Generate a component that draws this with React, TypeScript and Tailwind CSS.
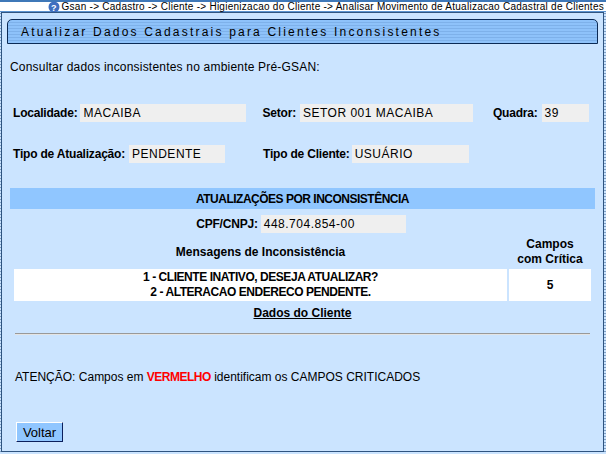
function Field({ label, value, w, gap = "ml-[3px]" }: { label: string; value: string; w: string; gap?: string }) {
  return (
    <div className="flex items-center">
      <span className="font-bold whitespace-nowrap tracking-[-0.2px]">{label}</span>
      <span className={`${gap} ${w} h-[18px] bg-[#efefef] pl-[3px] leading-[18px] text-[12px] whitespace-nowrap tracking-[0.5px]`}>{value}</span>
    </div>
  );
}

export default function App() {
  return (
    <div className="w-[606px] h-[454px] overflow-hidden bg-[repeating-linear-gradient(0deg,#cbe4ff_0px,#cbe4ff_2px,#7f9fc4_2px,#7f9fc4_3px)] font-['Liberation_Sans',Arial,sans-serif] text-[12px] text-black flex flex-col">
      <div className="h-[12px] shrink-0 bg-white border-t-[2px] border-[#3f78b8] border-b border-b-[#5b93d0] flex items-center justify-end pr-[2px] text-[10px] leading-[9px] tracking-[0.26px] whitespace-nowrap">
        <svg width="12" height="12" viewBox="0 0 12 12" className="mr-[2px] shrink-0">
          <circle cx="6" cy="6" r="5.5" fill="#3f6fc0" />
          <text x="6" y="9.5" textAnchor="middle" fontSize="9" fontWeight="700" fill="#fff">?</text>
        </svg>
        <span>Gsan -&gt; Cadastro -&gt; Cliente -&gt; Higienizacao do Cliente -&gt; Analisar Movimento de Atualizacao Cadastral de Clientes</span>
      </div>
      <div className="flex-1 flex flex-col ml-px mr-[2px] mb-[2px] bg-[#cbe4ff] border border-[#2f5480] pt-[6px] pl-[5px] pr-[3px]">
        <div className="h-[25px] shrink-0 mr-[2px] border border-[#0b2a55] rounded-tl-[5px] rounded-tr-[5px] pl-[13px] flex items-center text-[12px] tracking-[2.2px] bg-[repeating-linear-gradient(0deg,#8ec2fa_0px,#8ec2fa_2px,#7eb1ea_2px,#7eb1ea_3px)]">
          Atualizar Dados Cadastrais para Clientes Inconsistentes
        </div>
        <p className="mt-[16px] ml-[3px] tracking-[0.2px] leading-[14px]">Consultar dados inconsistentes no ambiente Pré-GSAN:</p>
        <div className="mt-[30px] ml-[6px] flex items-center">
          <Field label="Localidade:" value="MACAIBA" w="w-[166px]" gap="ml-[3px]" />
          <div className="ml-[16px]"><Field label="Setor:" value="SETOR 001 MACAIBA" w="w-[173px]" gap="ml-[4px]" /></div>
          <div className="ml-[20px]"><Field label="Quadra:" value="39" w="w-[47px]" gap="ml-[4px]" /></div>
        </div>
        <div className="mt-[23px] ml-[6px] flex items-center">
          <Field label="Tipo de Atualização:" value="PENDENTE" w="w-[96px]" gap="ml-[4px]" />
          <div className="ml-[38px]"><Field label="Tipo de Cliente:" value="USUÁRIO" w="w-[117px]" gap="ml-[2px]" /></div>
        </div>
        <div className="mt-[25px] ml-[3px] w-[585px] h-[21px] shrink-0 bg-[#90c6ff] font-bold tracking-[-0.5px] flex items-center justify-center">ATUALIZAÇÕES POR INCONSISTÊNCIA</div>
        <div className="mt-[6px] flex justify-center mr-[5px]">
          <Field label="CPF/CNPJ:" value="448.704.854-00" w="w-[145px]" />
        </div>
        <div className="ml-[7px] mt-[3px] w-[577px] flex gap-[2px] font-bold text-center">
          <div className="w-[493px] flex items-center justify-center">Mensagens de Inconsistência</div>
          <div className="w-[82px] leading-[15px] pt-[1px]">Campos<br />com Crítica</div>
        </div>
        <div className="ml-[7px] mt-[2px] w-[577px] flex gap-[2px] font-bold text-center leading-[15px]">
          <div className="w-[493px] h-[32px] bg-white flex items-center justify-center tracking-[-0.45px]"><div>1 - CLIENTE INATIVO, DESEJA ATUALIZAR?<br />2 - ALTERACAO ENDERECO PENDENTE.</div></div>
          <div className="w-[82px] h-[32px] bg-white flex items-center justify-center">5</div>
        </div>
        <div className="mt-[5px] text-center font-bold underline mr-[2px] leading-[14px]">Dados do Cliente</div>
        <hr className="mt-[13px] ml-[8px] w-[575px] border-0 h-px bg-[#999] shadow-[0_1px_0_#e4e4e4]" />
        <p className="mt-[36px] ml-[8px] leading-[14px]">ATENÇÃO: Campos em <b className="text-[#ff0000] tracking-[-0.5px]">VERMELHO</b> identificam os CAMPOS CRITICADOS</p>
        <button className="mt-[38px] ml-[9px] w-[47px] h-[20px] shrink-0 bg-[#90c6ff] text-[13px] border border-t-white border-l-white border-r-[#0b1f5c] border-b-[#0b1f5c] leading-none">Voltar</button>
      </div>
    </div>
  );
}
